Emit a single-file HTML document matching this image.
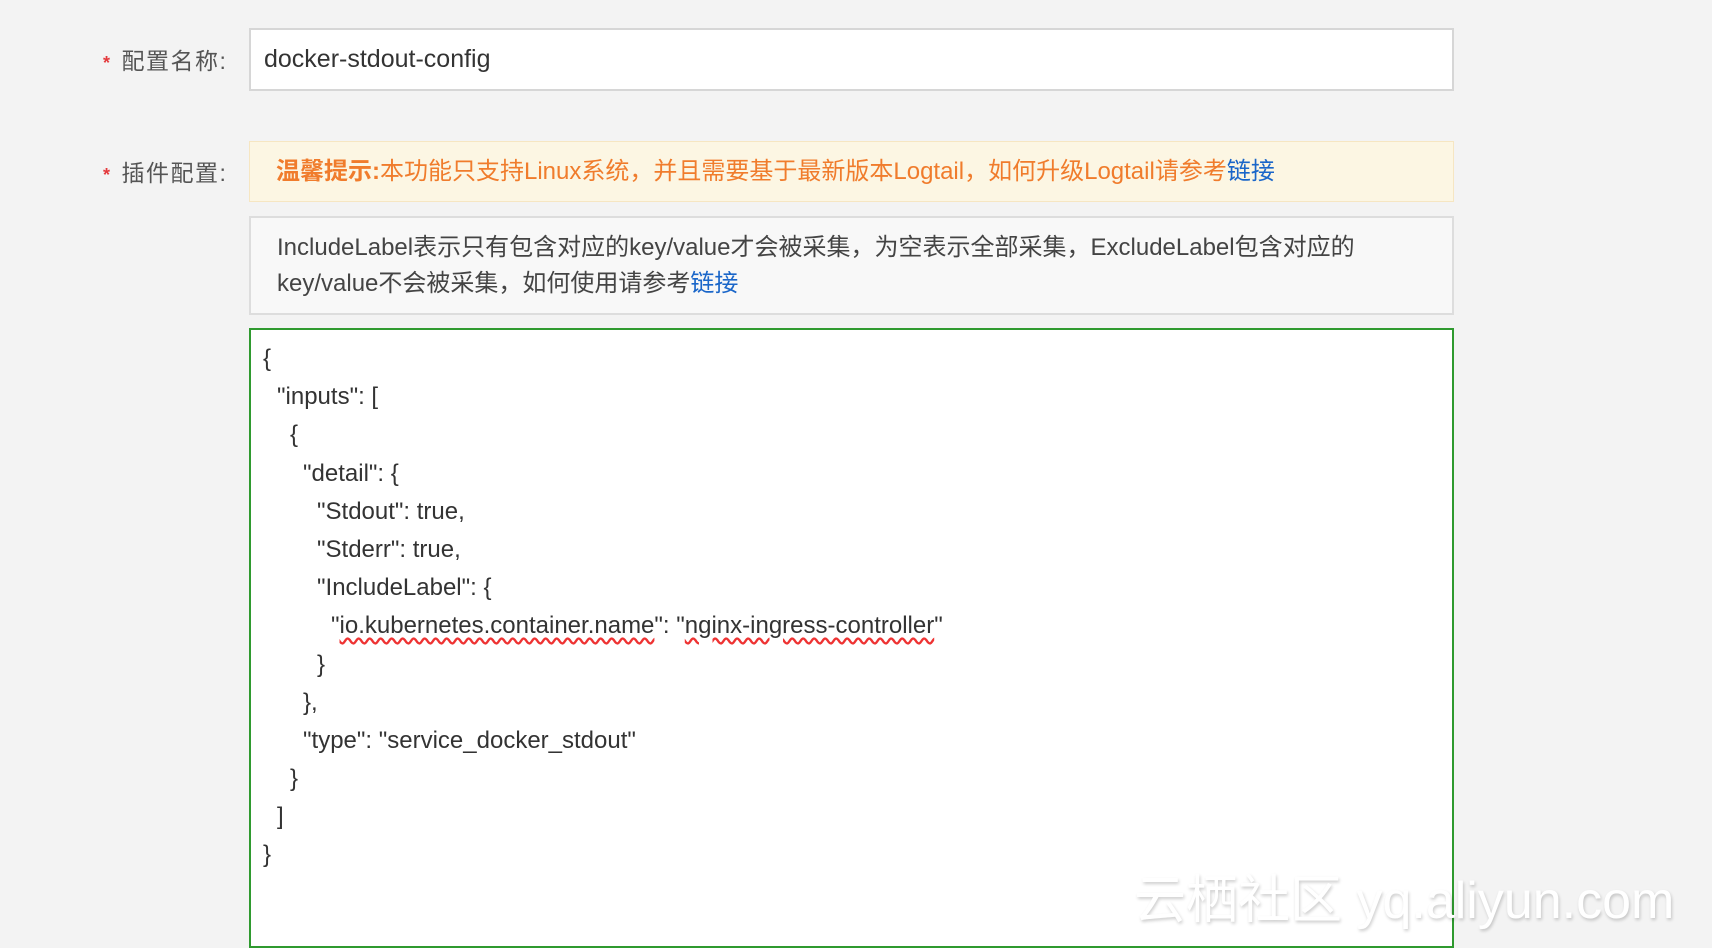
<!DOCTYPE html>
<html><head><meta charset="utf-8"><style>
body{margin:0;width:1712px;height:934px;background:#f3f3f3;font-family:"Liberation Sans","Noto Sans CJK SC",sans-serif;overflow:hidden;position:relative;color:#333}
.lab{position:absolute;left:103px;font-size:23px;color:#555;letter-spacing:1.5px}
.lab b{color:#e4393c;font-weight:bold;margin-right:10px;font-size:18px}
.box{position:absolute;left:249px;width:1205px;box-sizing:border-box}
.in{top:28px;height:63px;background:#fff;border:2px solid #d6d6d6;font-size:25px;line-height:59px;padding-left:13px;color:#333}
.warn{top:141px;height:61px;background:#fcf6e3;border:1px solid #f6e6c2;font-size:24px;line-height:59px;padding-left:26px;color:#f07c2c}
.info{top:216px;height:99px;background:#f8f8f8;border:2px solid #ddd;font-size:24px;line-height:36px;padding:12px 0 0 26px;color:#444}
a{color:#1a66c9;text-decoration:none}
.code{top:328px;height:620px;background:#fff;border:2px solid #2f9a2f;font-size:24px;padding-top:10px;color:#333}
.code div{height:38.2px;line-height:38px;white-space:pre}
.u{text-decoration:underline wavy #e33;text-underline-offset:4px}
.wm{position:absolute;left:1134px;top:858px;font-size:52px;color:#fff;text-shadow:1px 2px 3px rgba(0,0,0,.2);letter-spacing:0px}
</style></head><body>
<div class="lab" style="top:42px"><b>*</b>配置名称:</div>
<div class="box in">docker-stdout-config</div>
<div class="lab" style="top:154px"><b>*</b>插件配置:</div>
<div class="box warn"><strong>温馨提示:</strong>本功能只支持Linux系统，并且需要基于最新版本Logtail，如何升级Logtail请参考<a>链接</a></div>
<div class="box info">IncludeLabel表示只有包含对应的key/value才会被采集，为空表示全部采集，ExcludeLabel包含对应的<br>key/value不会被采集，如何使用请参考<a>链接</a></div>
<div class="box code">
<div style="padding-left:12px">{</div>
<div style="padding-left:26px">"inputs": [</div>
<div style="padding-left:39px">{</div>
<div style="padding-left:52px">"detail": {</div>
<div style="padding-left:66px">"Stdout": true,</div>
<div style="padding-left:66px">"Stderr": true,</div>
<div style="padding-left:66px">"IncludeLabel": {</div>
<div style="padding-left:80px">"<span class="u">io.kubernetes.container.name</span>": "<span class="u">nginx-ingress-controller</span>"</div>
<div style="padding-left:66px">}</div>
<div style="padding-left:52px">},</div>
<div style="padding-left:52px">"type": "service_docker_stdout"</div>
<div style="padding-left:39px">}</div>
<div style="padding-left:26px">]</div>
<div style="padding-left:12px">}</div>
</div>
<div class="wm">云栖社区 yq.aliyun.com</div>
</body></html>
